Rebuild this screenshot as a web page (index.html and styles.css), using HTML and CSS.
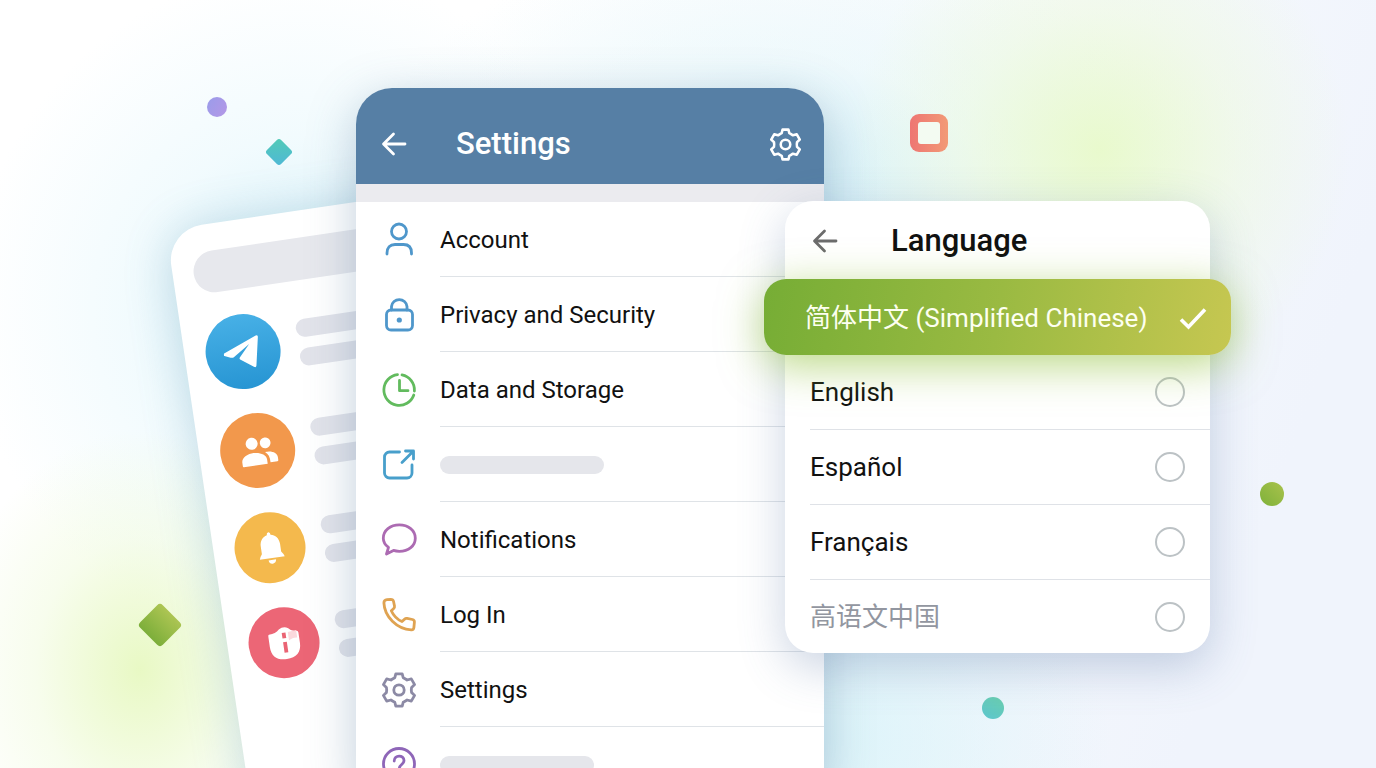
FILE: index.html
```html
<!DOCTYPE html>
<html lang="en">
<head>
    <meta charset="UTF-8">
    <meta name="viewport" content="width=device-width, initial-scale=1.0">
    <title>Language Settings</title>
    <link rel="stylesheet" href="styles.css">
</head>
<body>
    <svg class="sprite" aria-hidden="true">
        <symbol id="gear" viewBox="-18 -18 36 36">
            <path d="M-3.2-16.200H3.2L4.2-12.300Q6-11.400 8.100-10L12.300-11.100 15.600-5.400 12.600-2.600Q12 0 12.600 2.600L15.600 5.400 12.300 11.100 8.100 10Q6 11.400 4.200 12.300L3.200 16.200H-3.200L-4.200 12.300Q-6 11.400-8.100 10L-12.300 11.100-15.600 5.400-12.600 2.600Q-12 0-12.600-2.600L-15.600-5.400-12.300-11.100-8.100-10Q-6-11.400-4.200-12.300Z"/>
            <circle r="5.2"/>
        </symbol>
        <symbol id="back" viewBox="0 0 32 32">
            <path d="M27 16H6M15.500 6L5.500 16L15.500 26"/>
        </symbol>
    </svg>

    <main class="scene">
        <span class="shape dot-purple"></span>
        <span class="shape diamond-teal"></span>
        <span class="shape diamond-green"></span>
        <span class="shape square-red"></span>
        <span class="shape dot-green"></span>
        <span class="shape dot-teal"></span>

        <!-- Chat list -->
        <section class="chats">
            <div class="search"></div>
            <div class="chat">
                <div class="avatar blue">
                    <svg viewBox="-20 -20 40 40"><path transform="rotate(8.4)" d="M-19.500 1.500L12-16.500Q14.300-17.500 14.200-15L12.800 13.500Q12.500 16 10.300 14.800L-3.500 7.500Q-4.500 6.700-3.800 5.600L5.500-8L-9.500 5Q-11 6.300-13 5.700L-19.300 4Q-21 3-19.500 1.500Z"/></svg>
                </div>
                <div class="lines"><span></span><span></span></div>
            </div>
            <div class="chat">
                <div class="avatar orange">
                    <svg viewBox="-20 -20 40 40"><circle cx="-5.500" cy="-8" r="6"/><circle cx="8" cy="-7" r="5.400"/><path d="M-17.500 13V9.500C-17.500 4.500-11 1.500-5 1.500S7.500 4.500 7.500 9.500V14H-16.500Q-17.500 14-17.500 13ZM6.500 2.200C13 1.500 18.500 4.500 18.500 9V12Q18.500 13 17.500 13H10.500C10.800 8 9.500 4.500 6.500 2.200Z"/></svg>
                </div>
                <div class="lines"><span></span><span></span></div>
            </div>
            <div class="chat">
                <div class="avatar yellow small">
                    <svg viewBox="-20 -20 40 40"><path d="M-13 10.500Q-12.500 8-10 5V-3C-10-9-6.500-13-2-14Q-2-17 0-17T2-14C7-13 10.500-9 10.500-3V5Q13 8 13.500 10.500ZM-4 12.500H4Q3.500 16.500 0 16.500T-4 12.500Z"/></svg>
                </div>
                <div class="lines"><span></span><span></span></div>
            </div>
            <div class="chat">
                <div class="avatar red small">
                    <svg viewBox="-20 -20 40 40"><path d="M-15-11Q-8-11-4-15Q1-18 6-15Q9-11 14-11Q16-11 16-9V2C16 12 10 17 0 17S-16 12-16 2V-9Q-16-11-15-11Z"/><path class="mark" d="M-1.500-11H2.500V-5H-1.500ZM-1.500-1H2.500V10H-1.500Z"/><path class="tint" d="M5-11L14-12V-4Q9-5 5-2Z"/></svg>
                </div>
                <div class="lines"><span></span><span></span></div>
            </div>
        </section>

        <!-- Settings -->
        <section class="settings">
            <header class="settings-header">
                <button type="button" aria-label="Back"><svg class="icon-back"><use href="#back"/></svg></button>
                <h1>Settings</h1>
                <button type="button" aria-label="Options"><svg class="icon-gear"><use href="#gear"/></svg></button>
            </header>
            <nav class="menu">
                <a href="#" class="c-blue">
                    <svg viewBox="0 0 36 36"><circle cx="18" cy="9.500" r="7.500"/><path d="M6 32V31C6 25.500 9 22.500 14 22.500H22.500C27.500 22.500 30.500 25.500 30.500 31V32"/></svg>
                    <span class="label">Account</span>
                </a>
                <a href="#" class="c-blue">
                    <svg viewBox="0 0 36 36"><rect x="5.500" y="13" width="26" height="20" rx="4.500"/><path d="M10.500 13V9.500A7.800 7.800 0 0 1 26 9.500V13"/><circle class="solid" cx="18.300" cy="23" r="2.600"/></svg>
                    <span class="label">Privacy and Security</span>
                </a>
                <a href="#" class="c-green">
                    <svg viewBox="0 0 36 36"><path d="M21 2.900A15.400 15.400 0 0 1 33.400 19M32.800 23A15.400 15.400 0 1 1 16.500 2.600M18.500 8.500V18.700H27"/></svg>
                    <span class="label">Data and Storage</span>
                </a>
                <a href="#" class="c-sky" aria-label="Link">
                    <svg viewBox="0 0 36 36"><path d="M18.500 5H8.500A5 5 0 0 0 3.500 10V26A5 5 0 0 0 8.500 31H26A5 5 0 0 0 31 26V18M21 15.500L32 4.500M24.500 4H32.500V12"/></svg>
                    <span class="label"><i class="bar"></i></span>
                </a>
                <a href="#" class="c-purple">
                    <svg viewBox="0 0 36 36"><path d="M5.500 32L7.500 25.300C4 22.800 2.300 19.800 2.300 16.200C2.300 8.500 9.300 2.800 18.300 2.800S34.300 8.500 34.300 16.200S27.500 29.300 18.300 29.300C16 29.300 14.200 29 12.500 28.400Z"/></svg>
                    <span class="label">Notifications</span>
                </a>
                <a href="#" class="c-orange">
                    <svg viewBox="0 0 36 36"><path d="M6 2.700L9.800 2.300C11.200 2.300 12.200 3 12.500 4.300L13.500 9C13.700 10 13.300 11 12.500 11.700L10.300 13.700C12.300 18.200 16.200 22.300 21 24.600L23.500 22.200C24.200 21.500 25.200 21.200 26.100 21.400L31.500 22.500C32.800 22.800 33.500 23.800 33.400 25.100L32.900 30.500C32.800 32 31.700 32.900 30.200 32.800C16 32.300 3.400 19.500 2.900 5.900C2.900 4.200 4.200 2.900 6 2.700Z"/></svg>
                    <span class="label">Log In</span>
                </a>
                <a href="#" class="c-grey">
                    <svg><use href="#gear"/></svg>
                    <span class="label">Settings</span>
                </a>
                <a href="#" class="c-violet" aria-label="Help">
                    <svg viewBox="0 0 36 36"><circle cx="18" cy="17" r="15.500"/><path d="M13.200 14C13.200 7.500 23 7.500 23 13.500C23 17.500 18.300 17.500 18.300 21.500"/><circle class="solid" cx="18.300" cy="26" r="1.600"/></svg>
                    <span class="label"><i class="bar short"></i></span>
                </a>
            </nav>
        </section>

        <!-- Language picker -->
        <section class="language">
            <header class="language-header">
                <button type="button" aria-label="Back"><svg class="icon-back"><use href="#back"/></svg></button>
                <h2>Language</h2>
            </header>
            <form class="options">
                <label class="option selected" lang="zh-Hans">
                    <span>简体中文 (Simplified Chinese)</span>
                    <input type="radio" name="language" checked>
                    <svg class="check" viewBox="0 0 28 28"><path d="M2 15.500L9.500 23L26 5.500"/></svg>
                </label>
                <label class="option"><span>English</span><input type="radio" name="language"></label>
                <label class="option"><span>Español</span><input type="radio" name="language"></label>
                <label class="option"><span>Français</span><input type="radio" name="language"></label>
                <label class="option muted" lang="zh-Hans"><span>高语文中国</span><input type="radio" name="language"></label>
            </form>
        </section>
    </main>
</body>
</html>
```
FILE: styles.css
```css
* {
    box-sizing: border-box;
}
body {
    margin: 0;
    font-family: Roboto, "Noto Sans CJK SC", sans-serif;
    color: #111;
}
h1, h2 {
    margin: 0;
    font-size: 31px;
    line-height: 36px;
    font-weight: 500;
}
button {
    display: flex;
    padding: 0;
    border: none;
    background: none;
    color: inherit;
    cursor: pointer;
}
svg {
    display: block;
    flex: none;
    fill: none;
    stroke: currentColor;
    stroke-width: 2.8;
    stroke-linecap: round;
    stroke-linejoin: round;
}
.sprite {
    position: absolute;
    width: 0;
    height: 0;
}
.scene {
    position: relative;
    height: 100vh;
    min-height: 768px;
    overflow: hidden;
    background:
        radial-gradient(circle 250px at calc(50% + 412px) 150px, rgba(232, 250, 200, 0.9), rgba(236, 250, 215, 0.45) 55%, rgba(240, 250, 230, 0)),
        radial-gradient(ellipse 190px 240px at calc(50% - 548px) 670px, rgba(230, 248, 190, 0.9), rgba(236, 250, 210, 0.4) 55%, rgba(240, 252, 225, 0)),
        radial-gradient(ellipse 330px 340px at calc(50% - 388px) 310px, rgba(205, 237, 248, 0.8), rgba(225, 246, 252, 0.45) 50%, rgba(240, 252, 255, 0)),
        radial-gradient(ellipse 420px 260px at calc(50% + 92px) 190px, rgba(205, 238, 246, 0.9), rgba(225, 246, 250, 0.45) 50%, rgba(240, 252, 255, 0)),
        radial-gradient(ellipse 300px 220px at calc(50% + 122px) 740px, rgba(215, 243, 249, 0.9), rgba(230, 246, 252, 0)),
        linear-gradient(110deg, #fff 30%, #f7fafd 62%, #f0f4fc 88%);
}

/* Floating shapes */
.shape {
    position: absolute;
}
.dot-purple {
    left: calc(50% - 481px);
    top: 97px;
    width: 20px;
    height: 20px;
    border-radius: 50%;
    background: linear-gradient(120deg, #9a9cea, #b497e6);
}
.diamond-teal {
    left: calc(50% - 419px);
    top: 142px;
    width: 20px;
    height: 20px;
    border-radius: 3px;
    background: linear-gradient(135deg, #52cbb6, #4fb8d6);
    transform: rotate(45deg);
}
.diamond-green {
    left: calc(50% - 544px);
    top: 609px;
    width: 32px;
    height: 32px;
    border-radius: 4px;
    background: linear-gradient(#adc553, #7cae3a);
    transform: rotate(45deg);
}
.square-red {
    left: calc(50% + 222px);
    top: 114px;
    width: 38px;
    height: 38px;
    border-radius: 9px;
    background: linear-gradient(90deg, #ee7673, #f29a76);
}
.square-red::after {
    content: "";
    display: block;
    width: 22px;
    height: 22px;
    margin: 8px;
    border-radius: 3px;
    background: #f3fbf2;
}
.dot-green {
    left: calc(50% + 572px);
    top: 482px;
    width: 24px;
    height: 24px;
    border-radius: 50%;
    background: linear-gradient(45deg, #7eb13a, #a9c24c);
}
.dot-teal {
    left: calc(50% + 294px);
    top: 697px;
    width: 22px;
    height: 22px;
    border-radius: 50%;
    background: linear-gradient(30deg, #5cc6cf, #6bcfae);
}

/* Chat list */
.chats {
    position: absolute;
    left: calc(50% - 522px);
    top: 230px;
    width: 340px;
    min-height: 700px;
    padding: 27px 0 0 21px;
    display: flex;
    flex-direction: column;
    gap: 25px;
    border-radius: 36px;
    background: #fff;
    box-shadow: 0 4px 48px rgba(80, 145, 175, 0.32);
    transform: rotate(-8.4deg);
    transform-origin: top left;
}
.search {
    height: 42px;
    border-radius: 21px;
    background: #e7e8ed;
}
.chat {
    display: flex;
    align-items: center;
    gap: 18px;
}
.avatar {
    width: 75px;
    height: 75px;
    display: flex;
    align-items: center;
    justify-content: center;
    border-radius: 50%;
}
.avatar.small {
    width: 71px;
    height: 71px;
}
.avatar svg {
    width: 40px;
    height: 40px;
    fill: #fff;
    stroke: none;
}
.avatar.small svg {
    width: 38px;
    height: 38px;
}
.avatar .mark {
    fill: #ea6474;
}
.avatar .tint {
    fill: #fbd9dd;
}
.blue {
    background: linear-gradient(#47b0e6, #2795d3);
}
.orange {
    background: #f2984c;
}
.yellow {
    background: #f4b94d;
}
.red {
    background: #ec6676;
}
.lines {
    flex: 1;
    display: flex;
    flex-direction: column;
    gap: 11px;
}
.lines span {
    height: 18px;
    border-radius: 9px;
    background: #e2e3ea;
}

/* Settings */
.settings {
    position: absolute;
    left: calc(50% - 332px);
    top: 88px;
    width: 468px;
    border-radius: 36px;
    overflow: hidden;
    background: #fff;
    box-shadow: 0 12px 48px rgba(70, 110, 150, 0.34);
}
.settings-header {
    height: 96px;
    padding: 16px 22px 0;
    display: flex;
    align-items: center;
    background: #567fa5;
    color: #fff;
}
.settings-header h1 {
    flex: 1;
    padding-left: 46px;
}
.icon-back {
    width: 32px;
    height: 32px;
}
.icon-gear {
    width: 33px;
    height: 33px;
}
.menu {
    border-top: 18px solid #ebebef;
}
.menu a {
    height: 75px;
    padding-left: 25px;
    display: flex;
    align-items: center;
    gap: 23px;
    text-decoration: none;
}
.menu svg {
    width: 36px;
    height: 36px;
}
.menu .solid {
    fill: currentColor;
    stroke: none;
}
.label {
    flex: 1;
    align-self: stretch;
    display: flex;
    align-items: center;
    padding-top: 2px;
    border-bottom: 1px solid #dfe3e7;
    font-size: 24px;
    line-height: 30px;
    color: #111;
}
.bar {
    width: 164px;
    height: 18px;
    border-radius: 9px;
    background: #e5e6eb;
}
.bar.short {
    width: 154px;
}
.c-blue {
    color: #4f97cb;
}
.c-green {
    color: #62bb5e;
}
.c-sky {
    color: #489fcb;
}
.c-purple {
    color: #ac6bb2;
}
.c-orange {
    color: #dfa352;
}
.c-grey {
    color: #8c8aa5;
}
.c-violet {
    color: #8e66b8;
}

/* Language picker */
.language {
    position: absolute;
    left: calc(50% + 97px);
    top: 201px;
    width: 425px;
    border-radius: 28px;
    background: #fff;
    box-shadow: 0 14px 46px rgba(80, 110, 160, 0.3);
}
.language-header {
    height: 78px;
    padding: 2px 24px 0;
    display: flex;
    align-items: center;
    gap: 50px;
}
.language-header button {
    color: #6c6c6c;
}
.option {
    height: 75px;
    margin-left: 25px;
    padding-right: 25px;
    display: flex;
    align-items: center;
    justify-content: space-between;
    border-bottom: 1px solid #dfe2e7;
    font-size: 26px;
    line-height: 36px;
    cursor: pointer;
}
.option:last-child {
    height: 73px;
    border-bottom: none;
}
.option input {
    appearance: none;
    width: 30px;
    height: 30px;
    margin: 0;
    border: 2px solid #bcc2c5;
    border-radius: 50%;
}
.option.muted {
    color: #9296a0;
}
.option.selected {
    position: relative;
    height: 76px;
    margin: 0 -21px;
    padding: 2px 24px 0 41px;
    border: none;
    border-radius: 22px;
    background: linear-gradient(100deg, #76ad35, #9aba42 50%, #c6c751);
    box-shadow: 0 10px 44px rgba(140, 190, 50, 0.6);
    color: #fdfff0;
}
.option.selected input {
    position: absolute;
    opacity: 0;
}
.check {
    width: 28px;
    height: 28px;
    color: #fff;
    stroke-width: 3.6;
    stroke-linecap: butt;
    stroke-linejoin: miter;
}
```
